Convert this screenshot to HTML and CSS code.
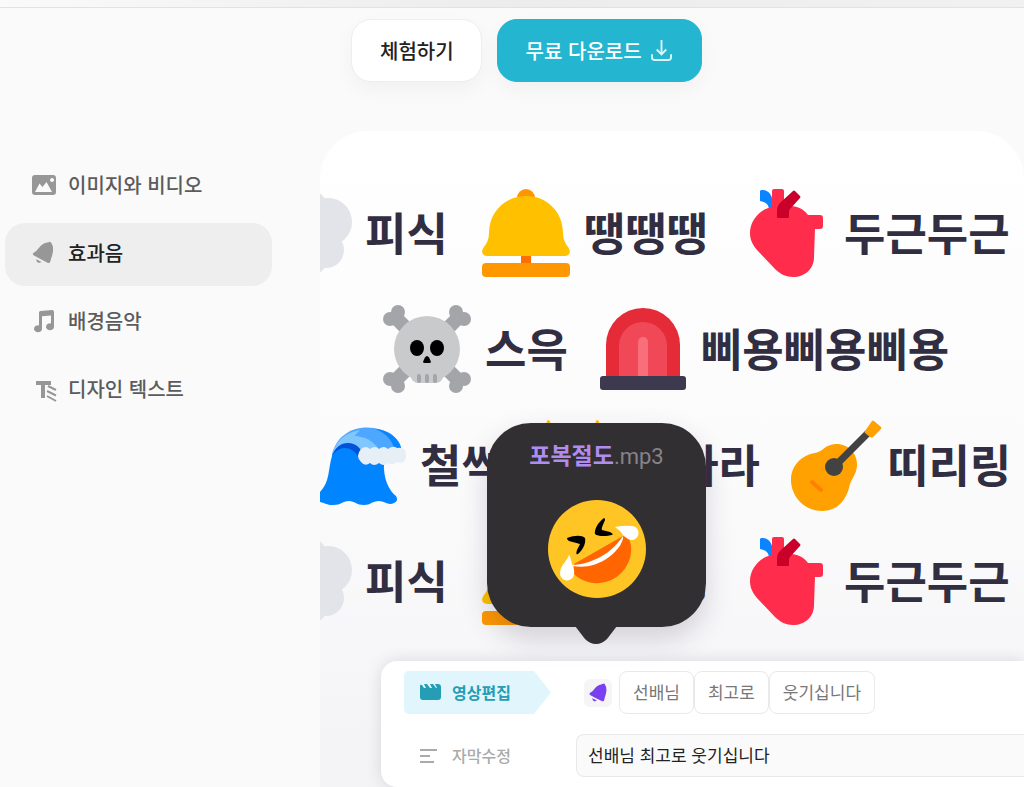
FILE: index.html
```html
<!DOCTYPE html>
<html lang="ko">
<head>
<meta charset="utf-8">
<meta name="viewport" content="width=device-width, initial-scale=1">
<title>효과음</title>
<link rel="stylesheet" href="styles.css">
</head>
<body>
<svg class="sprite" aria-hidden="true">
  <symbol id="cloud" viewBox="0 0 88 88">
    <g fill="#e3e4e9"><circle cx="65" cy="33" r="24"/><circle cx="63" cy="61" r="18"/><circle cx="40" cy="24" r="26"/><circle cx="42" cy="62" r="26"/><circle cx="20" cy="46" r="20"/></g>
  </symbol>
  <symbol id="bell" viewBox="0 0 88 88">
    <circle cx="44" cy="9" r="9" fill="#ff9500"/>
    <path fill="#ff6f00" d="M39 64h10v12H39z"/>
    <path fill="#ffc000" d="M44 7C65 7 81 23 81 44C81 50 83 54 86 58C90 63 87 67 83 67H5C1 67-2 63 2 58C5 54 7 50 7 44C7 23 23 7 44 7Z"/>
    <rect y="74" width="88" height="14" rx="4" fill="#ff9800"/>
  </symbol>
  <symbol id="heart" viewBox="0 0 88 88">
    <path fill="#0a84ff" d="M19 1C28 0 32 8 31 21H27C27 15 23 13 18 12V2Z"/>
    <rect x="30" width="12" height="28" rx="2" fill="#ff2d4b"/>
    <path fill="#ff2d4b" d="M40 17C53 16 61 19 66 26H78q3 0 3 3V37q0 3-3 3H73L72 68C72 80 63 88 51 88C44 88 38 85 33 80L15 61C10 55 8 50 8 44C8 30 20 18 33 18Z"/>
    <path fill="#c8002a" d="M35 28V22C35 18 36 16 39 13L51 2Q52 1 53 2L58 7Q59 8 58 9L48 20Q47 21 47 23V28Q47 29 46 29H36Q35 29 35 28Z"/>
  </symbol>
  <symbol id="skull" viewBox="0 0 88 88">
    <g fill="#a3a5a8"><path stroke="#a3a5a8" stroke-width="14" d="M14 14L74 74M74 14L14 74"/>
    <circle cx="15" cy="7" r="7"/><circle cx="7" cy="14" r="7"/><circle cx="73" cy="7" r="7"/><circle cx="81" cy="14" r="7"/><circle cx="7" cy="74" r="7"/><circle cx="15" cy="81" r="7"/><circle cx="81" cy="74" r="7"/><circle cx="73" cy="81" r="7"/></g>
    <circle cx="44" cy="44" r="33" fill="#c9cacc"/><rect x="28" y="60" width="32" height="18" rx="7" fill="#c9cacc"/>
    <path stroke="#a3a5a8" stroke-width="4" stroke-linecap="round" d="M36 71v5M44 71v5M52 71v5"/>
    <ellipse cx="34" cy="43" rx="7" ry="8"/><ellipse cx="54" cy="43" rx="7" ry="8"/><path d="M44 51Q46 51 48 57Q48 58 46 58H42Q40 58 40 57Q42 51 44 51Z"/>
  </symbol>
  <symbol id="siren" viewBox="0 0 88 88">
    <path fill="#e52a38" d="M7 72V40a37 37 0 0 1 74 0v32z"/><path fill="#f14857" d="M20 72V41a24 24 0 0 1 48 0v31z"/><path fill="#f86f7b" d="M39 72V37a5 5 0 0 1 10 0v35z"/>
    <rect x="1" y="71" width="86" height="14" rx="3" fill="#3d394e"/>
  </symbol>
  <symbol id="wave" viewBox="0 0 88 88">
    <path fill="#4da6ff" d="M14 34C18 14 36 4 56 7C74 10 84 22 84 34L40 38Z"/>
    <path fill="#0a84ff" d="M57 8C73 9 84 20 84 32H77C76 21 69 12 57 8Z"/>
    <path fill="#80c6ff" d="M14 32C18 22 26 14 38 15C50 16 58 23 62 30L45 36Z"/>
    <path fill="#80c6ff" d="M18 24C23 16 31 11 42 9L31 21Z"/>
    <path fill="#0052d6" d="M14 35C17 26 23 22 30 22C38 22 43 27 45 34L40 42H14Z"/>
    <path fill="#0084ff" d="M14 35C22 23 36 25 42 39L66 42C65 57 71 70 78 75Q81 80 76 82C70 85 67 80 61 80C54 80 53 84 46 84C38 84 37 80 31 80C24 80 24 84 15 84C8 84 8 82 2 81V71C12 61 10 48 14 35Z"/>
    <path fill="#e5eff5" d="M43 28Q48 24 52 28Q57 24 61 28Q66 24 70 28Q75 24 79 27Q88 25 88 34Q88 44 79 41Q75 45 70 42Q66 46 61 42Q56 46 52 42Q47 46 43 41Q37 35 43 28Z"/>
  </symbol>
  <symbol id="stars" viewBox="0 0 88 88">
    <path fill="#ffc107" d="M14-1Q16-1 17 4Q20 22 36 26Q19 31 15 54Q11 31-4 26Q9 22 12 4Q13-1 14-1ZM63-1Q65-1 66 4Q70 35 88 44Q68 51 64 88Q58 51 38 44Q58 35 61 4Q62-1 63-1Z"/>
  </symbol>
  <symbol id="guitar" viewBox="0 0 88 88">
    <path fill="#ffa100" d="M24 32C32 31 33 24 44 23C57 22 67 33 66 45C65 55 60 57 58 67C54 82 44 90 31 90C14 90 0 76 0 59C0 44 11 34 24 32Z"/>
    <circle cx="43" cy="46" r="9" fill="#424242"/><path stroke="#424242" stroke-width="7" d="M43 46L77 12"/>
    <path fill="#ffa100" d="M81 0Q82-1 83 0L90 6Q91 7 90 8L82 16Q81 17 79 16L74 12Q73 11 74 10Z"/><path stroke="#ff8000" stroke-width="4" stroke-linecap="round" d="M21 61L30 69"/>
  </symbol>
  <symbol id="tilted-bell" viewBox="0 0 24 24">
    <path fill="currentColor" d="M17.5 1.2Q19.5-.2 20.5 2.2Q22.5 5 22 10C21.7 14 20 17 19.5 20Q19 22.7 16.5 21.7Q9 18 3 14.6Q.5 13 3 11.5C6 10 7 7.5 10 4.5Q13 1.7 17.5 1.2ZM5.2 18.2L10.6 21Q8.500 22.500 6.500 21.200Q5 20 5.200 18.200Z"/>
  </symbol>
</svg>

<div class="topbar"></div>
<header class="actions">
  <button class="action" type="button">체험하기</button>
  <button class="action action-primary" type="button">무료 다운로드
    <svg class="download" viewBox="0 0 22 22" aria-hidden="true"><path d="M11 0v15M6 10l5 5 5-5M1 15v3q0 3 3 3h14q3 0 3-3v-3"/></svg>
  </button>
</header>

<main class="layout">
  <nav class="menu">
    <a class="menu-item" href="#image"><svg class="menu-icon" viewBox="0 0 26 26" aria-hidden="true"><path fill="currentColor" fill-rule="evenodd" d="M4 3h18q3 0 3 3v14q0 3-3 3H4q-3 0-3-3V6q0-3 3-3zm0 17h17l-5.500-10-4 5-3-3.500zM21 6a2 2 0 1 0 .1 0z"/></svg>이미지와 비디오</a>
    <a class="menu-item is-active" href="#effect" aria-current="page"><svg class="menu-icon" viewBox="0 -1 26 26" aria-hidden="true"><use href="#tilted-bell" width="24" height="24"/></svg>효과음</a>
    <a class="menu-item" href="#music"><svg class="menu-icon" viewBox="0 0 26 26" aria-hidden="true"><path fill="currentColor" d="M8 4.500Q8 3 9.500 3L21 2q2 0 2 2v15a4 3.500 0 1 1-3-3.600V7.500l-9 .8V21a4 3.500 0 1 1-3-3.600z"/></svg>배경음악</a>
    <a class="menu-item" href="#text"><svg class="menu-icon" viewBox="0 -1 26 26" aria-hidden="true"><path fill="none" stroke="currentColor" stroke-width="4" stroke-linejoin="round" d="M5 6h15M12 6v15" /><path fill="none" stroke="currentColor" stroke-width="2" d="M17 9l8 4M16 14l9 4.500M16 19l9 5"/></svg>디자인 텍스트</a>
  </nav>

  <section class="stage" id="effect">
    <div class="rows">
      <div class="row row-lead">
        <span class="sound"><svg class="emoji"><use href="#cloud" width="88" height="88"/></svg>피식</span>
        <span class="sound"><svg class="emoji"><use href="#bell" width="88" height="88"/></svg>땡땡땡</span>
        <span class="sound"><svg class="emoji"><use href="#heart" width="88" height="88"/></svg>두근두근</span>
      </div>
      <div class="row row-inset">
        <span class="sound"><svg class="emoji"><use href="#skull" width="88" height="88"/></svg>스윽</span>
        <span class="sound"><svg class="emoji"><use href="#siren" width="88" height="88"/></svg>삐용삐용삐용</span>
      </div>
      <div class="row row-edge">
        <span class="sound"><svg class="emoji"><use href="#wave" width="88" height="88"/></svg>철썩</span>
        <span class="sound"><svg class="emoji"><use href="#stars" width="88" height="88"/></svg>샤라라</span>
        <span class="sound"><svg class="emoji emoji-narrow"><use href="#guitar" width="88" height="88"/></svg>띠리링</span>
      </div>
      <div class="row row-lead">
        <span class="sound"><svg class="emoji"><use href="#cloud" width="88" height="88"/></svg>피식</span>
        <span class="sound"><svg class="emoji"><use href="#bell" width="88" height="88"/></svg>땡땡땡</span>
        <span class="sound"><svg class="emoji"><use href="#heart" width="88" height="88"/></svg>두근두근</span>
      </div>
    </div>

    <div class="bubble">
      <p class="file"><strong>포복절도</strong><span class="ext">.mp3</span></p>
      <svg class="laugh" viewBox="0 0 98 98" aria-hidden="true">
        <circle cx="49" cy="49" r="49" fill="#ffc524"/>
        <path fill="#ff6500" d="M75 36L80 37C87 49 82 66 71 75C58 86 38 86 26 74V64Z"/>
        <path fill="#fff" d="M24 65C45 64 64 53 75 36C76 40 71 50 61 57C49 66 36 68 25 66Z"/>
        <path fill="#fff" d="M21 55Q22 55 24 64Q27 71 26 74A7 7 0 0 1 12 73Q12 68 17 62Q20 58 21 55ZM67 27Q76 25 84 26A7 7 0 1 1 80 39Q75 36 72 31Z"/>
        <path d="M19 38C27 35 34 35 37 38C38 42 36 49 30 54C28 55 28 53 29 50L32 44L21 41Q19 40 19 38ZM56 18C50 22 46 30 47 34C50 37 60 36 64 35Q66 34 62 32L54 30C53 28 56 23 57 20Q57 18 56 18Z"/>
      </svg>
      <svg class="tail" viewBox="0 0 42 18" aria-hidden="true"><path fill="#322f33" d="M0 0H42L32 13Q27 18 21 18Q15 18 10 13Z"/></svg>
    </div>

    <div class="editor">
      <div class="tab is-on"><svg class="tab-icon" viewBox="0 0 21 18" aria-hidden="true"><path fill="currentColor" d="M0 3Q0 1 2 2L4 5H6L4 1H7L10 5H12L10 1H13L16 5H17L15 1H18Q21 1 21 4V14Q21 17 18 17H3Q0 17 0 14Z"/></svg>영상편집</div>
      <div class="track">
        <span class="badge"><svg class="badge-bell" aria-hidden="true"><use href="#tilted-bell"/></svg></span>
        <div class="chips"><button class="chip" type="button">선배님</button><button class="chip" type="button">최고로</button><button class="chip" type="button">웃기십니다</button></div>
      </div>
      <label class="tab" for="caption"><svg class="tab-icon" viewBox="0 0 21 18" aria-hidden="true"><path fill="none" stroke="currentColor" stroke-width="2" d="M0 4h17M0 10h10M0 16h14"/></svg>자막수정</label>
      <input class="caption" id="caption" type="text" value="선배님 최고로 웃기십니다">
    </div>
  </section>
</main>
</body>
</html>
```
FILE: styles.css
```css
* { box-sizing: border-box; }

body {
  margin: 0;
  min-height: 100vh;
  display: flex;
  flex-direction: column;
  overflow-x: hidden;
  background: #fafafa;
  color: #222;
  font-family: "Noto Sans CJK KR", sans-serif;
  font-size: 20px;
  font-weight: 500;
}

button, input { font: inherit; color: inherit; }

.sprite { position: absolute; width: 0; height: 0; }

.topbar {
  height: 8px;
  border-bottom: 1px solid #e2e2e2;
  background: linear-gradient(90deg, #fafafa, #ececec 50%, #f1f1f1);
}

.actions {
  display: flex;
  gap: 15px;
  padding: 11px 0 49px 351px;
}

.action {
  display: flex;
  align-items: center;
  gap: 9px;
  height: 63px;
  padding: 0 27px 0 28px;
  border: 1px solid #eee;
  border-radius: 20px;
  background: #fff;
  box-shadow: 0 8px 20px rgba(0, 0, 0, 0.04);
  white-space: nowrap;
}

.action-primary {
  padding: 0 29px 0 28px;
  border-color: #24b6d0;
  background: #24b6d0;
  color: #fff;
}

.download {
  width: 21px;
  height: 21px;
  fill: none;
  stroke: #d9f6fa;
  stroke-width: 2;
}

.layout {
  flex: 1;
  display: grid;
  grid-template-columns: 320px 1fr;
}

.menu {
  display: flex;
  flex-direction: column;
  gap: 5px;
  padding: 24px 48px 0 5px;
}

.menu-item {
  display: flex;
  align-items: center;
  gap: 11px;
  height: 63px;
  padding: 0 0 4px 26px;
  border-radius: 20px;
  color: #5c5c5c;
  text-decoration: none;
}

.menu-item.is-active { background: #eee; color: #222; }

.menu-icon { width: 26px; height: 26px; color: #979797; }

.stage {
  position: relative;
  min-width: 0;
  overflow: hidden;
  padding-top: 58px;
  border-radius: 48px 48px 0 0;
  background: linear-gradient(#fff, #fafafb 60%, #f3f3f6);
}

.rows {
  display: flex;
  flex-direction: column;
  gap: 28px;
}

.row {
  display: flex;
  gap: 31px;
  height: 88px;
  color: #322e42;
  font-size: 45px;
  font-weight: 700;
  line-height: 85px;
  white-space: nowrap;
}

.row-lead { gap: 34px; margin-left: -57px; }
.row-inset { margin-left: 63px; }
.row-edge { margin-left: -2px; }

.sound { display: flex; flex: none; gap: 14px; }

.emoji { width: 88px; height: 88px; overflow: visible; }

.emoji-narrow { width: 82px; }

symbol { overflow: visible; }

.bubble {
  position: absolute;
  top: 292px;
  left: 167px;
  display: flex;
  flex-direction: column;
  align-items: center;
  gap: 27px;
  width: 219px;
  height: 204px;
  padding-top: 14px;
  border-radius: 44px;
  background: #322f33;
  box-shadow: 0 12px 28px rgba(50, 30, 60, 0.18);
}

.file {
  height: 36px;
  margin: 0;
  color: #858388;
  font-size: 23px;
  font-weight: 400;
  line-height: 34px;
}

.file strong { color: #b08cf0; font-weight: 700; }

.ext { font-family: Roboto, sans-serif; font-size: 22px; }

.laugh { width: 98px; height: 98px; }

.tail {
  position: absolute;
  top: 203px;
  left: 88px;
  width: 42px;
  height: 18px;
}

.editor {
  display: grid;
  grid-template-columns: 147px 1fr;
  gap: 20px 25px;
  margin: 36px 0 0 61px;
  padding: 10px 0 10px 23px;
  border-radius: 16px 0 0 16px;
  background: #fff;
  box-shadow: 0 0 16px rgba(0, 0, 0, 0.12);
}

.tab {
  display: flex;
  align-items: center;
  gap: 11px;
  height: 43px;
  padding: 0 0 2px 16px;
  color: #aaa;
  font-size: 16px;
}

.tab.is-on {
  border-radius: 5px;
  background: #e0f6fc;
  clip-path: polygon(0 0, 130px 0, 100% 50%, 130px 100%, 0 100%);
  color: #259db5;
  font-weight: 700;
}

.tab-icon { width: 21px; height: 18px; }

.track {
  display: flex;
  align-items: center;
  gap: 7px;
  padding-left: 8px;
  font-size: 17px;
  font-weight: 400;
}

.badge {
  display: grid;
  place-items: center;
  width: 28px;
  height: 28px;
  border-radius: 6px;
  background: #f5f4f7;
  color: #7b3ff2;
}

.badge-bell { width: 20px; height: 20px; }

.chips { display: flex; }

.chip {
  height: 43px;
  padding: 0 13px 2px;
  border: 1px solid #e9e9e9;
  border-radius: 8px;
  background: #fff;
  color: #777;
}

.caption {
  width: 100%;
  min-width: 0;
  height: 43px;
  padding: 0 11px 2px;
  border: 1px solid #e9e9e9;
  border-right: 0;
  border-radius: 8px 0 0 8px;
  background: #fafafa;
  font-size: 17px;
  font-weight: 400;
}
```
